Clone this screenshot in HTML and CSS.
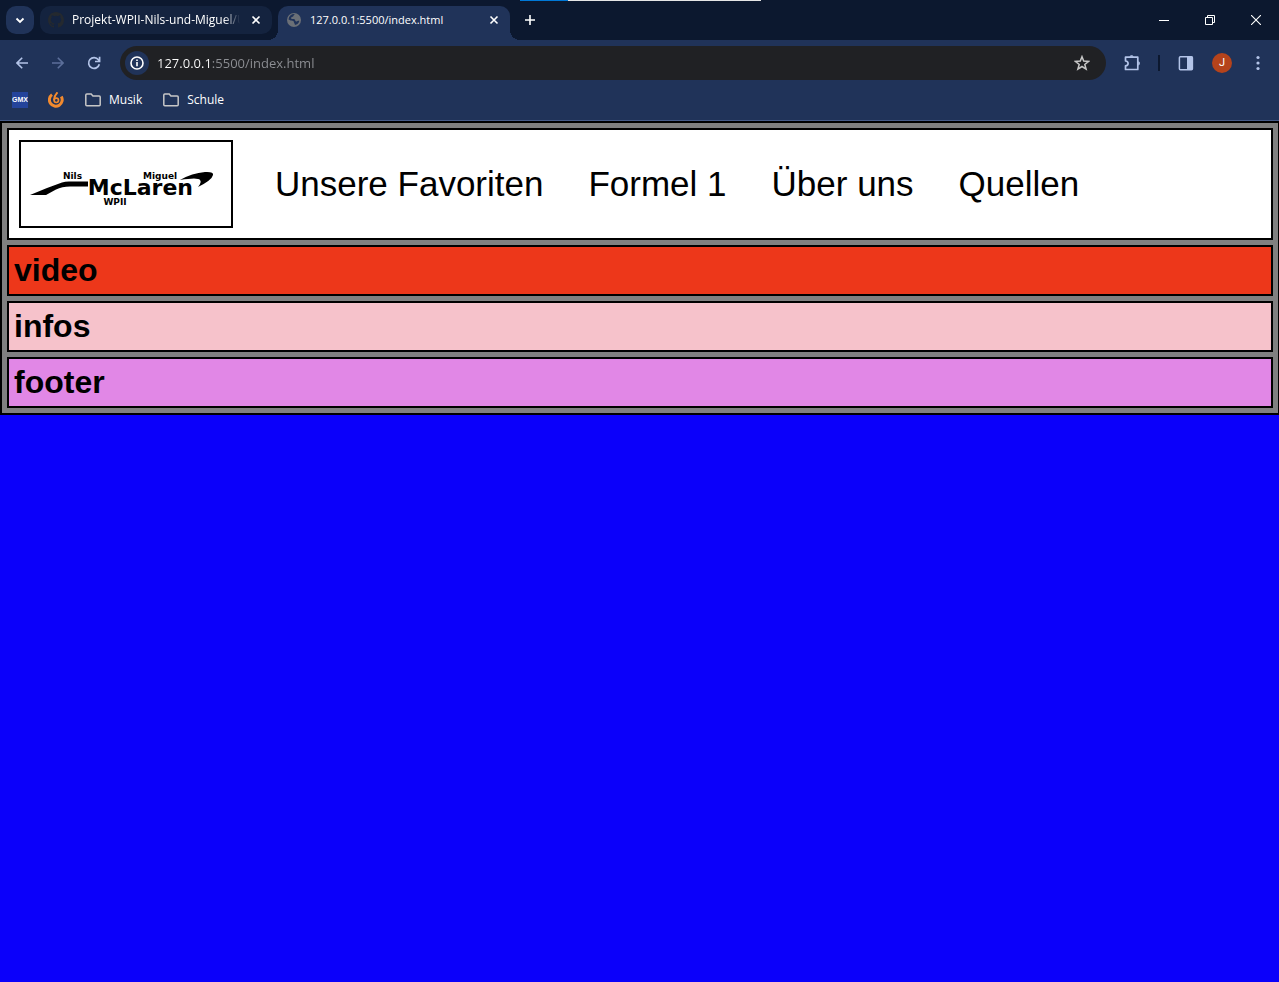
FILE: index.html
```html
<!DOCTYPE html>
<html lang="de">
<head>
<meta charset="utf-8">
<title>127.0.0.1:5500/index.html</title>
<link rel="stylesheet" href="styles.css">
</head>
<body>
<div class="browser">
  <div class="load-line"></div>
  <div class="tab-strip">
    <button class="tab-search" aria-label="Tabs durchsuchen">
      <svg width="10" height="10" viewBox="0 0 10 10"><path d="M1.500 3.500 5 7l3.500-3.500" fill="none" stroke="#fff" stroke-width="1.800"/></svg>
    </button>
    <div class="tab">
      <svg width="16" height="16" viewBox="0 0 16 16" fill="#24292f"><path d="M8 0C3.580 0 0 3.580 0 8c0 3.540 2.290 6.530 5.470 7.590.4.070.55-.17.55-.38v-1.490c-2.010.37-2.530-.49-2.690-.94-.09-.23-.48-.94-.82-1.130-.28-.15-.68-.52-.01-.53.63-.01 1.080.58 1.230.82.72 1.210 1.870.87 2.330.66.07-.52.28-.87.51-1.070-1.780-.2-3.640-.89-3.640-3.950 0-.87.31-1.590.82-2.150-.08-.2-.36-1.020.08-2.120 0 0 .67-.21 2.200.82a7.600 7.600 0 0 1 4 0c1.530-1.040 2.200-.82 2.200-.82.44 1.100.16 1.920.08 2.120.51.56.82 1.270.82 2.150 0 3.070-1.870 3.750-3.650 3.950.29.25.54.73.54 1.480v2.200c0 .21.15.46.55.38A8 8 0 0 0 16 8c0-4.420-3.580-8-8-8z"/></svg>
      <span class="tab-title faded">Projekt-WPII-Nils-und-Miguel/U</span>
      <button class="tab-close" aria-label="Tab schließen"><svg width="10" height="10" viewBox="0 0 10 10"><path d="m1.500 1.500 7 7m0-7-7 7" stroke="#fff" stroke-width="1.600"/></svg></button>
    </div>
    <div class="tab active">
      <svg width="16" height="16" viewBox="0 0 16 16"><circle cx="8" cy="8" r="7" fill="#6b7077"/><path d="M9 2.200c-1.800.6-1 2-2.300 2.600-1.200.5-1.700.6-1.500 1.600.3 1 1.800.3 2.800.7 1.400.5 1 2 2.100 2.300 1.300.3 1.700-.9 3.200-.5-.5 2-2.100 3.700-4.400 4.200.2-1.900-.8-1.500-.9-2.700-.1-1.100-1.200-1.600-2.400-1.800-1.400-.3-2.500-.9-3.100-1.200A5.600 5.600 0 0 1 9 2.200z" fill="#203359"/></svg>
      <span class="tab-title">127.0.0.1:5500/index.html</span>
      <button class="tab-close" aria-label="Tab schließen"><svg width="10" height="10" viewBox="0 0 10 10"><path d="m1.500 1.500 7 7m0-7-7 7" stroke="#fff" stroke-width="1.600"/></svg></button>
    </div>
    <button class="new-tab" aria-label="Neuer Tab"><svg width="12" height="12" viewBox="0 0 12 12"><path d="M6 1v10M1 6h10" stroke="#fff" stroke-width="1.600"/></svg></button>
    <div class="window-controls">
      <button aria-label="Minimieren"><svg width="10" height="10" viewBox="0 0 10 10"><path d="M0 5.500h10" stroke="#fff"/></svg></button>
      <button aria-label="Verkleinern"><svg width="10" height="10" viewBox="0 0 10 10" fill="none" stroke="#fff"><path d="M.5 2.500h7v7h-7zM2.500 2.500v-2h7v7h-2"/></svg></button>
      <button aria-label="Schließen"><svg width="10" height="10" viewBox="0 0 10 10"><path d="m0 0 10 10M10 0 0 10" stroke="#fff" stroke-width="1.100"/></svg></button>
    </div>
  </div>
  <div class="toolbar">
    <button class="tool" aria-label="Zurück"><svg width="12" height="12" viewBox="0 0 12 12" fill="none" stroke="#b3c4e8" stroke-width="1.600"><path d="M12 6H1.200M6.200.8 1 6l5.200 5.200"/></svg></button>
    <button class="tool" aria-label="Vorwärts"><svg width="12" height="12" viewBox="0 0 12 12" fill="none" stroke="#5c6f9a" stroke-width="1.600"><path d="M0 6h10.800M5.800.8 11 6l-5.200 5.200"/></svg></button>
    <button class="tool" aria-label="Neu laden"><svg width="14" height="14" viewBox="0 0 14 14" fill="none" stroke="#b3c4e8" stroke-width="1.700"><path d="M12.300 8.200A5.400 5.400 0 1 1 11.400 3.800L12.600 5.200M12.600.8v4.700H8"/></svg></button>
    <div class="omnibox">
      <button class="site-info" aria-label="Website-Informationen"><svg width="14" height="14" viewBox="0 0 14 14"><circle cx="7" cy="7" r="6" fill="none" stroke="#fff" stroke-width="1.600"/><path d="M7 6v4.300M7 3.400V5" stroke="#fff" stroke-width="1.600"/></svg></button>
      <input class="url" type="text" aria-label="Adresse" value="127.0.0.1:5500/index.html">
      <button class="bookmark-star" aria-label="Lesezeichen hinzufügen"><svg width="16" height="16" viewBox="0 0 16 16"><path d="m8 1.700 1.700 4.400 4.800.3-3.700 3 1.300 4.700L8 11.500l-4.100 2.600 1.300-4.700-3.700-3 4.800-.3z" fill="none" stroke="#c7c7c7" stroke-width="1.500"/></svg></button>
    </div>
    <button class="tool" aria-label="Erweiterungen"><svg width="18" height="18" viewBox="0 0 18 18" fill="none" stroke="#b3c4e8" stroke-width="1.700"><path d="M2.500 3.200h12.300v12.300H2.500v-3.700c1.600-.2 2.600-1.100 2.600-2.400S4.100 7.200 2.500 7z" stroke-linejoin="round"/><path d="M6.500 2.800c.2-2.200 4-2.200 4.200 0zM15.200 7.200c2.300.2 2.300 4 0 4.200z" fill="#b3c4e8" stroke="none"/></svg></button>
    <span class="divider"></span>
    <button class="tool" aria-label="Seitenleiste"><svg width="16" height="16" viewBox="0 0 16 16"><rect x="1.400" y="1.800" width="13" height="13" rx="1" fill="none" stroke="#b3c4e8" stroke-width="1.500"/><path d="M9 1.500h5.500v13H9z" fill="#b3c4e8"/></svg></button>
    <button class="tool" aria-label="Profil J"><span class="avatar">J</span></button>
    <button class="tool" aria-label="Menü"><svg width="4" height="16" viewBox="0 0 4 16" fill="#b3c4e8"><circle cx="2" cy="2.500" r="1.600"/><circle cx="2" cy="8" r="1.600"/><circle cx="2" cy="13.500" r="1.600"/></svg></button>
  </div>
  <nav class="bookmarks" aria-label="Lesezeichen">
    <a href="#" aria-label="GMX"><svg width="16" height="16" viewBox="0 0 16 16"><path d="M0 0h16v16H0z" fill="#24449b"/><text class="gmx" x="8" y="10" text-anchor="middle">GMX</text></svg></a>
    <a href="#" aria-label="Lernplattform"><svg width="16" height="16" viewBox="0 0 16 16" fill="none" stroke="#f28a2e"><path d="M4 2.600A6.400 6.400 0 1 0 13.300 4.500" stroke-width="3"/><circle cx="8.300" cy="8.300" r="2.200" stroke-width="1.700"/><path d="M6.100 8.300Q5.900 4 9.500.3" stroke-width="1.900"/></svg></a>
    <a class="folder" href="#"><svg width="16" height="14" viewBox="0 0 16 14" fill="none" stroke="#c7c7c7" stroke-width="1.500"><path d="M.8 11.700V2q0-.9 1-.9h4.400l1.700 1.900h6.300q1 0 1 1v7.700q0 1-1 1H1.800q-1 0-1-1z"/></svg>Musik</a>
    <a class="folder" href="#"><svg width="16" height="14" viewBox="0 0 16 14" fill="none" stroke="#c7c7c7" stroke-width="1.500"><path d="M.8 11.700V2q0-.9 1-.9h4.400l1.700 1.900h6.300q1 0 1 1v7.700q0 1-1 1H1.800q-1 0-1-1z"/></svg>Schule</a>
  </nav>
</div>
<div class="container">
  <header class="box site-header">
    <a class="logo" href="#" aria-label="Nils Miguel McLaren WPII">
      <svg width="210" height="84" viewBox="21 142 210 84">
        <text class="logo-name" x="63" y="179">Nils</text>
        <text class="logo-name" x="143" y="179">Miguel</text>
        <text class="logo-brand" x="193" y="195" text-anchor="end">McLaren</text>
        <path d="M30 195Q46 188 62 182.500q3-1 7-1h19v5H70q-8 0-14 3l-10 5.500z"/>
        <path d="M180 180q12-7 25-8 9-.5 8 3-1 5-15 12 4-5 2-7-2-3-20 0z"/>
        <text class="logo-name" x="115" y="205" text-anchor="middle">WPII</text>
      </svg>
    </a>
    <nav class="menu">
      <a href="#">Unsere Favoriten</a>
      <a href="#">Formel 1</a>
      <a href="#">Über uns</a>
      <a href="#">Quellen</a>
    </nav>
  </header>
  <section class="box video"><h1>video</h1></section>
  <section class="box infos"><h1>infos</h1></section>
  <footer class="box footer"><h1>footer</h1></footer>
</div>
</body>
</html>
```
FILE: styles.css
```css
* { box-sizing: border-box; }
body {
  margin: 0;
  min-height: 100vh;
  background: #0b00fa;
  font-family: "Liberation Sans", Arial, sans-serif;
}
a { color: inherit; text-decoration: none; }
button {
  display: flex;
  align-items: center;
  justify-content: center;
  padding: 0;
  border: 0;
  background: none;
  flex: none;
}
svg { display: block; flex: none; }

.browser {
  position: relative;
  background: #203359;
  border-bottom: 1px solid #465b88;
  color: #fff;
  font: 12px/16px "Open Sans", "Noto Sans", sans-serif;
}
.load-line {
  position: absolute;
  top: 0;
  left: 520px;
  width: 241px;
  height: 1px;
  background: linear-gradient(to right, #0078d7 48px, #e6e6e6 48px);
}
.tab-strip {
  display: flex;
  align-items: flex-start;
  gap: 6px;
  height: 40px;
  padding: 6px 0 0 6px;
  background: #0c182f;
}
.tab-search {
  width: 28px;
  height: 28px;
  border-radius: 10px;
  background: #203359;
}
.tab {
  position: relative;
  display: flex;
  align-items: center;
  gap: 8px;
  width: 232px;
  height: 28px;
  padding: 0 8px;
  border-radius: 10px;
  background: #14233f;
}
.tab.active {
  height: 34px;
  padding-bottom: 6px;
  border-radius: 10px 10px 0 0;
  background: #203359;
  font-size: 11px;
}
.tab.active::before,
.tab.active::after {
  content: "";
  position: absolute;
  bottom: 0;
  width: 10px;
  height: 10px;
}
.tab.active::before {
  right: 100%;
  background: radial-gradient(circle at 0 0, transparent 10px, #203359 10px);
}
.tab.active::after {
  left: 100%;
  background: radial-gradient(circle at 100% 0, transparent 10px, #203359 10px);
}
.tab-title {
  flex: 1;
  min-width: 0;
  overflow: hidden;
  white-space: nowrap;
}
.faded {
  -webkit-mask-image: linear-gradient(to left, transparent, #000 16px);
  mask-image: linear-gradient(to left, transparent, #000 16px);
}
.tab-close { width: 16px; height: 16px; }
.new-tab { width: 28px; height: 28px; }
.window-controls { display: flex; margin: -6px 0 0 auto; }
.window-controls button { width: 46px; height: 40px; }

.toolbar {
  display: flex;
  align-items: center;
  padding: 6px 3px 0 4px;
}
.tool { width: 36px; height: 34px; }
.omnibox {
  display: flex;
  align-items: center;
  flex: 1;
  height: 34px;
  margin: 0 8px;
  padding: 0 12px 0 5px;
  border-radius: 17px;
  background: #202124;
}
.site-info {
  width: 24px;
  height: 24px;
  border-radius: 50%;
  background: #203359;
}
.url {
  flex: 1;
  min-width: 0;
  margin-left: 8px;
  padding: 0;
  border: 0;
  outline: 0;
  font: 13px/20px "Open Sans", "Noto Sans", sans-serif;
  color: transparent;
  background: linear-gradient(to right, #fff 54px, #8e9095 54px);
  -webkit-background-clip: text;
  background-clip: text;
}
.bookmark-star { width: 24px; height: 24px; }
.divider {
  width: 2px;
  height: 16px;
  margin: 0 8px;
  background: #0c182f;
}
.avatar {
  width: 20px;
  height: 20px;
  border-radius: 50%;
  background: #b5431b;
  color: #fff;
  font: 11px/20px Roboto, sans-serif;
}
.bookmarks {
  display: flex;
  align-items: center;
  gap: 20px;
  height: 40px;
  padding: 0 12px;
}
.folder { display: flex; align-items: center; gap: 8px; padding-left: 1px; }
.gmx { font: bold 7px "Liberation Sans", sans-serif; fill: #fff; }

.container {
  display: flex;
  flex-direction: column;
  gap: 5px;
  padding: 5px;
  border: solid #000;
  border-width: 2px 1px 2px 2px;
  background: #808080;
}
.box { padding: 5px; border: 2px solid #000; }
.site-header {
  display: flex;
  align-items: center;
  gap: 42px;
  padding: 10px;
  background: #fff;
}
.logo { border: 2px solid #000; }
.logo-name { font: bold 9px "DejaVu Sans", sans-serif; }
.logo-brand { font: bold 22px "DejaVu Sans", sans-serif; }
.menu { display: flex; flex-wrap: wrap; gap: 0 45px; font-size: 35px; line-height: 40px; }
.video { background: #ed371a; }
.infos { background: #f6c2cb; }
.footer { background: #e187e6; }
h1 { margin: 0; font-size: 32px; line-height: 37px; }
```
